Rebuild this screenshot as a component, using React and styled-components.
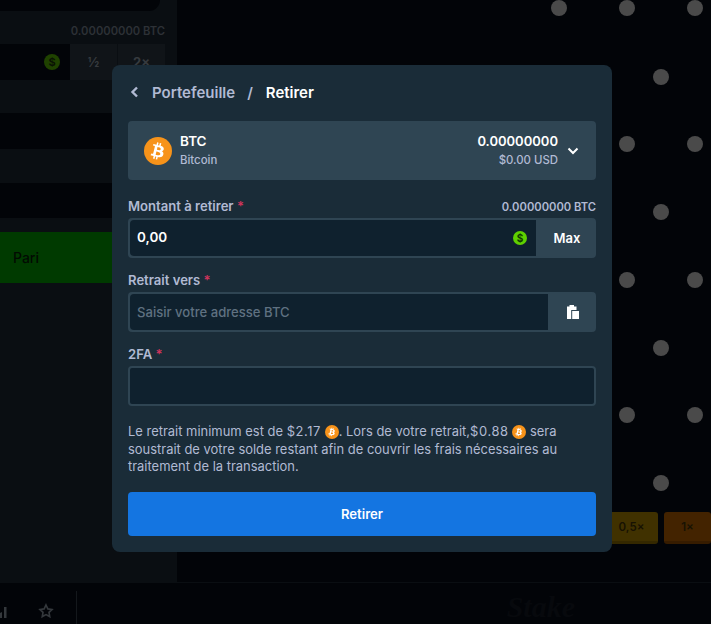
import React from 'react'
import styled, { createGlobalStyle } from 'styled-components'

const pegs = [
  [559, 8], [627, 8], [695, 8],
  [661, 77],
  [627, 144], [695, 144],
  [661, 212],
  [627, 280], [695, 280],
  [661, 348],
  [627, 415], [695, 415],
  [661, 483],
]

const GlobalStyle = createGlobalStyle`
  html, body {
    margin: 0;
    height: 100%;
    background: #020408;
    font-family: Inter, "Noto Sans", sans-serif;
  }
`

const Page = styled.div`
  position: relative;
  width: 711px;
  height: 624px;
  overflow: hidden;
  display: flex;
  flex-direction: column;
  background: #020408;
`
const Main = styled.div`
  flex: 1;
  display: flex;
  min-height: 0;
`
const Sidebar = styled.aside`
  width: 177px;
  background: #0a0e12;
  display: flex;
  flex-direction: column;
`
const TopPill = styled.div`
  height: 11px;
  background: #020408;
  border-radius: 0 0 20px 0;
  width: 160px;
`
const Balance = styled.div`
  height: 33px;
  box-sizing: border-box;
  padding: 14px 12px 0 0;
  text-align: right;
  font-size: 11.2px;
  line-height: 13px;
  font-weight: 600;
  color: #2d3136;
`
const AmountRow = styled.div`
  height: 36px;
  display: flex;
  background: #101418;
  margin-right: 12px;
`
const AmountField = styled.div`
  width: 70px;
  background: #020408;
  display: flex;
  align-items: center;
  justify-content: flex-end;
  padding-right: 10px;
  box-sizing: border-box;
`
const AmountChip = styled.div`
  flex: 1;
  display: flex;
  align-items: center;
  justify-content: center;
  font-size: 13px;
  font-weight: 700;
  color: #363a3e;
  & + & {
    border-left: 1px solid #0a0e12;
  }
`
const Coin = styled.span`
  width: 16px;
  height: 16px;
  border-radius: 50%;
  background: #1f4200;
  color: #0a1204;
  font-size: 11px;
  font-weight: 700;
  display: flex;
  align-items: center;
  justify-content: center;
`
const DarkRow = styled.div`
  height: ${(p) => p.$h}px;
  margin-top: ${(p) => p.$gap}px;
  background: #020408;
`
const BetButton = styled.div`
  height: 51px;
  margin-top: 14px;
  background: #003a00;
  color: #020a02;
  font-size: 14px;
  font-weight: 500;
  display: flex;
  align-items: center;
  padding-left: 13px;
`
const BoardArea = styled.div`
  flex: 1;
  position: relative;
`
const Peg = styled.span`
  position: absolute;
  width: 16px;
  height: 16px;
  border-radius: 50%;
  background: #4a4a4a;
  transform: translate(-50%, -50%);
`
const Multiplier = styled.div`
  position: absolute;
  top: 512px;
  height: 32px;
  width: ${(p) => p.$w}px;
  left: ${(p) => p.$x}px;
  border-radius: 3px;
  background: ${(p) => p.$bg};
  border-bottom: 3px solid ${(p) => p.$edge};
  box-sizing: border-box;
  color: #171203;
  font-size: 11.5px;
  font-weight: 600;
  display: flex;
  align-items: center;
  justify-content: center;
`
const Footer = styled.footer`
  height: 41px;
  border-top: 1px solid #0a0e12;
  background: #020408;
  display: flex;
  justify-content: space-between;
`
const FooterIcons = styled.div`
  width: 77px;
  border-right: 1px solid #14181c;
  margin-top: 8px;
  padding: 6px 22px 0 0;
  display: flex;
  align-items: center;
  justify-content: space-between;
  box-sizing: border-box;
  color: #34383c;
`
const Watermark = styled.span`
  align-self: center;
  margin: 6px 136px 0 0;
  font-family: "Liberation Serif", serif;
  font-size: 30px;
  font-style: italic;
  font-weight: 700;
  color: #07090d;
`
const Modal = styled.section`
  position: absolute;
  left: 112px;
  top: 65px;
  width: 500px;
  height: 487px;
  box-sizing: border-box;
  padding: 0 16px;
  background: #1a2c38;
  border-radius: 8px;
  color: #fff;
  display: flex;
  flex-direction: column;
`
const Breadcrumb = styled.header`
  height: 56px;
  padding-bottom: 2px;
  box-sizing: border-box;
  display: flex;
  align-items: center;
  font-size: 15px;
  font-weight: 600;
`
const BackIcon = styled.svg`
  width: 12px;
  height: 12px;
  margin: 0 11px 0 1px;
`
const Crumb = styled.span`
  color: ${(p) => (p.$current ? '#ffffff' : '#b1bad3')};
`
const Slash = styled.span`
  color: #b1bad3;
  margin: 0 13px 0 12px;
`
const CurrencySelect = styled.div`
  height: 59px;
  border-radius: 4px;
  background: #2f4553;
  display: flex;
  align-items: center;
  padding: 0 16px;
`
const CoinIcon = styled.svg`
  flex: none;
  display: block;
`
const CurrencyName = styled.div`
  margin: 0 0 2px 8px;
  flex: 1;
  display: flex;
  flex-direction: column;
  gap: 4px;
`
const Primary = styled.span`
  font-size: ${(p) => p.$size || 13.5}px;
  line-height: 16px;
  font-weight: 600;
  color: #fff;
`
const Secondary = styled.span`
  font-size: 11.4px;
  line-height: 14px;
  font-weight: 500;
  color: #b1bad3;
`
const CurrencyValue = styled(CurrencyName)`
  flex: none;
  align-items: flex-end;
  margin-left: 0;
`
const Chevron = styled.svg`
  width: 12px;
  height: 12px;
  margin-left: 9px;
  margin-right: 1px;
`
const Field = styled.div`
  margin-top: ${(p) => p.$mt}px;
`
const LabelRow = styled.div`
  height: 21px;
  box-sizing: border-box;
  padding-bottom: 2px;
  display: flex;
  align-items: center;
  justify-content: space-between;
  margin-bottom: 1px;
`
const Label = styled.label`
  font-size: 13.1px;
  font-weight: 600;
  color: #b1bad3;
`
const Required = styled.span`
  color: #d0345c;
`
const Available = styled.span`
  margin-top: 2px;
  font-size: 11.2px;
  font-weight: 600;
  color: #b1bad3;
`
const InputGroup = styled.div`
  height: 40px;
  display: flex;
  border-radius: 4px;
  background: #2f4553;
`
const InputBox = styled.div`
  flex: 1;
  margin: 2px 0 2px 2px;
  border-radius: 4px 0 0 4px;
  background: #0f212e;
  display: flex;
  align-items: center;
  padding: 0 9px 0 7px;
  font-size: 13.5px;
  font-weight: 600;
  color: #fff;
  justify-content: space-between;
`
const AmountValue = styled.span`
  margin-bottom: 2px;
`
const Placeholder = styled.span`
  font-size: 13.1px;
  font-weight: 500;
  color: #5f7181;
`
const SideButton = styled.div`
  width: ${(p) => p.$w}px;
  flex: none;
  box-sizing: border-box;
  padding-left: 2px;
  display: flex;
  align-items: center;
  justify-content: center;
  font-size: 13px;
  font-weight: 600;
`
const PlainInput = styled.div`
  height: 36px;
  border: 2px solid #2f4553;
  border-radius: 4px;
  background: #0f212e;
`
const Notice = styled.p`
  margin: 17px 0 0;
  font-size: 12.95px;
  line-height: 17.5px;
  font-weight: 400;
  color: #b1bad3;
`
const Money = styled.span`
  letter-spacing: 0.6px;
`
const InlineCoin = styled(CoinIcon)`
  display: inline-block;
  vertical-align: -3px;
`
const SubmitButton = styled.button`
  margin-top: 16px;
  height: 44px;
  border: 0;
  border-radius: 4px;
  background: #1475e1;
  color: #fff;
  font-family: inherit;
  font-size: 13.1px;
  font-weight: 600;
`

const BitcoinIcon = ({ size, as: Comp = CoinIcon }) => (
  <Comp width={size} height={size} viewBox="0 0 32 32">
    <circle cx="16" cy="16" r="16" fill="#f7931a" />
    <path
      fill="#fff"
      d="M22.6 14c.3-2.1-1.3-3.2-3.5-4l.7-2.8-1.7-.4-.7 2.8-1.4-.3.7-2.8-1.7-.4-.7 2.8-1.1-.3-2.4-.6-.5 1.8s1.3.3 1.3.3c.7.2.8.6.8 1l-.8 3.2-1.1 4.5c-.1.2-.3.5-.8.4l-1.3-.3-.9 2 2.3.6 1.2.3-.7 2.9 1.7.4.7-2.8 1.4.3-.7 2.8 1.7.4.7-2.9c3 .6 5.2.3 6.1-2.3.8-2.1 0-3.4-1.6-4.2 1.2-.3 2-1 2.3-2.6zm-4 5.6c-.5 2.1-4.1 1-5.3.7l.9-3.7c1.2.3 4.9.9 4.4 3zm.5-5.6c-.5 1.9-3.5.9-4.4.7l.8-3.4c1 .3 4.1.7 3.6 2.7z"
    />
  </Comp>
)

const App = () => (
  <Page>
    <GlobalStyle />
    <Main>
      <Sidebar>
        <TopPill />
        <Balance>0.00000000 BTC</Balance>
        <AmountRow>
          <AmountField>
            <Coin>$</Coin>
          </AmountField>
          <AmountChip>½</AmountChip>
          <AmountChip>2×</AmountChip>
        </AmountRow>
        <DarkRow $gap={33} $h={36} />
        <DarkRow $gap={34} $h={35} />
        <BetButton>Pari</BetButton>
      </Sidebar>
      <BoardArea />
    </Main>
    <Footer>
      <FooterIcons>
        <svg width="7" height="14" viewBox="0 0 7 14" fill="currentColor">
          <path d="M0 9l2-1v6H0zM4 3h2.5v11H4z" />
        </svg>
        <svg width="16" height="16" viewBox="0 0 24 24" fill="none" stroke="currentColor" strokeWidth="2.5">
          <path d="M12 3l2.8 5.8 6.2.9-4.5 4.4 1.1 6.3L12 17.4 6.4 20.4l1.1-6.3L3 9.7l6.2-.9z" />
        </svg>
      </FooterIcons>
      <Watermark>Stake</Watermark>
    </Footer>

    {pegs.map(([x, y]) => (
      <Peg key={`${x}-${y}`} style={{ left: x, top: y }} />
    ))}
    <Multiplier $x={605} $w={53} $bg="#403100" $edge="#342800">0,5×</Multiplier>
    <Multiplier $x={664} $w={47} $bg="#432300" $edge="#361c00">1×</Multiplier>

    <Modal>
      <Breadcrumb>
        <BackIcon viewBox="0 0 12 12" fill="none" stroke="#b1bad3" strokeWidth="2.4">
          <path d="M8 1.5L3.5 6 8 10.5" />
        </BackIcon>
        <Crumb>Portefeuille</Crumb>
        <Slash>/</Slash>
        <Crumb $current>Retirer</Crumb>
      </Breadcrumb>

      <CurrencySelect>
        <BitcoinIcon size={28} />
        <CurrencyName>
          <Primary>BTC</Primary>
          <Secondary>Bitcoin</Secondary>
        </CurrencyName>
        <CurrencyValue>
          <Primary $size={13}>0.00000000</Primary>
          <Secondary>$0.00 USD</Secondary>
        </CurrencyValue>
        <Chevron viewBox="0 0 12 12" fill="none" stroke="#fff" strokeWidth="2">
          <path d="M1.5 3.5L6 8l4.5-4.5" />
        </Chevron>
      </CurrencySelect>

      <Field $mt={16}>
        <LabelRow>
          <Label>Montant à retirer <Required>*</Required></Label>
          <Available>0.00000000 BTC</Available>
        </LabelRow>
        <InputGroup>
          <InputBox>
            <AmountValue>0,00</AmountValue>
            <svg width="14" height="14" viewBox="0 0 14 14">
              <circle cx="7" cy="7" r="7" fill="#5fd000" />
              <text x="7" y="10.5" textAnchor="middle" fontSize="10" fontWeight="700" fill="#0f3a00">$</text>
            </svg>
          </InputBox>
          <SideButton $w={60}>Max</SideButton>
        </InputGroup>
      </Field>

      <Field $mt={12}>
        <LabelRow>
          <Label>Retrait vers <Required>*</Required></Label>
        </LabelRow>
        <InputGroup>
          <InputBox>
            <Placeholder>Saisir votre adresse BTC</Placeholder>
          </InputBox>
          <SideButton $w={48}>
            <svg width="12" height="14" viewBox="0 0 12 14" fill="#fff">
              <path d="M2.5 0H7v1.5h2.5V5H4.2v9H0V1.5h2.5z" />
              <rect x="5.2" y="6" width="6.8" height="8" />
            </svg>
          </SideButton>
        </InputGroup>
      </Field>

      <Field $mt={12}>
        <LabelRow>
          <Label>2FA <Required>*</Required></Label>
        </LabelRow>
        <PlainInput />
      </Field>

      <Notice>
        Le retrait minimum est de <Money>$2.17</Money> <BitcoinIcon size={14} as={InlineCoin} />. Lors de votre retrait,<Money>$0.88</Money>{' '}
        <BitcoinIcon size={14} as={InlineCoin} /> sera soustrait de votre solde restant afin de couvrir les frais
        nécessaires au traitement de la transaction.
      </Notice>

      <SubmitButton>Retirer</SubmitButton>
    </Modal>
  </Page>
)

export default App
